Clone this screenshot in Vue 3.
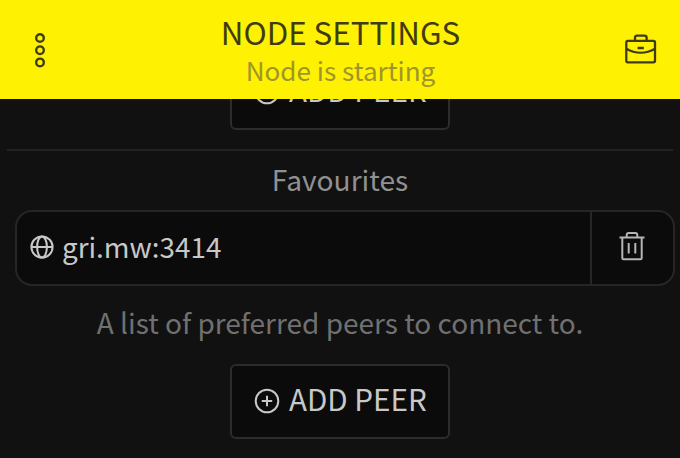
<script setup>
import { ref } from 'vue';

const title = ref('NODE SETTINGS');
const status = ref('Node is starting');
const peers = ref(['gri.mw:3414']);

const removePeer = (peer) => {
    peers.value = peers.value.filter(p => p !== peer);
};
</script>

<template>
    <div class="screen">
        <header class="header">
            <svg class="dots" width="12" height="38" viewBox="0 0 12 38">
                <circle cx="6" cy="7" r="3.8" />
                <circle cx="6" cy="19.2" r="3.8" />
                <circle cx="6" cy="31.4" r="3.8" />
            </svg>
            <div class="titles">
                <div class="title">{{ title }}</div>
                <div class="status">{{ status }}</div>
            </div>
            <svg class="briefcase" width="34" height="32" viewBox="0 0 34 32">
                <rect x="2.3" y="7.9" width="28.7" height="21.4" rx="1.5" />
                <path d="M11 7.5V4.6a2 2 0 0 1 2-2h7.6a2 2 0 0 1 2 2v2.9" />
                <path d="M2.3 15.8c9 5.2 19.7 5.2 28.7 0M13.6 15h6.2" />
            </svg>
        </header>

        <main class="content">
            <button class="add">
                <svg width="26" height="26" viewBox="0 0 26 26">
                    <circle cx="13" cy="13" r="11.3" />
                    <path d="M13 7.8v10.4M7.8 13h10.4" />
                </svg>
                <span>ADD PEER</span>
            </button>
            <div class="line"></div>
            <div class="section">Favourites</div>
            <div v-for="peer in peers" :key="peer" class="peer">
                <div class="address">
                    <svg width="24" height="24" viewBox="0 0 24 24">
                        <circle cx="12" cy="12" r="10.6" />
                        <ellipse cx="12" cy="12" rx="4.9" ry="10.6" />
                        <path d="M1.4 12h21.2" />
                    </svg>
                    <span>{{ peer }}</span>
                </div>
                <div class="remove" @click="removePeer(peer)">
                    <svg width="28" height="30" viewBox="0 0 28 30">
                        <path d="M1.5 6.5h25" />
                        <path d="M4.3 6.5v20.2a1.5 1.5 0 0 0 1.5 1.5h16.4a1.5 1.5 0 0 0 1.5-1.5v-20.2" />
                        <path d="M8.7 6V4a2 2 0 0 1 2-2h6.6a2 2 0 0 1 2 2v2M10.7 12v10.5M17.3 12v10.5" />
                    </svg>
                </div>
            </div>
            <div class="hint">A list of preferred peers to connect to.</div>
            <button class="add">
                <svg width="26" height="26" viewBox="0 0 26 26">
                    <circle cx="13" cy="13" r="11.3" />
                    <path d="M13 7.8v10.4M7.8 13h10.4" />
                </svg>
                <span>ADD PEER</span>
            </button>
        </main>
    </div>
</template>

<style>
body {
    background: #111;
}
</style>

<style scoped>
.screen {
    height: 458px;
    overflow: hidden;
    background: #111;
    font-family: "Noto Sans CJK SC", "Noto Sans", sans-serif;
}
svg {
    display: block;
    flex: none;
    fill: none;
    stroke: currentColor;
    stroke-width: 2;
}
.header {
    position: relative;
    z-index: 1;
    display: flex;
    justify-content: space-between;
    box-sizing: border-box;
    height: 98.6px;
    padding: 0 22px 0 34px;
    background: #fef102;
    color: #3f3c13;
}
.dots {
    margin: 31px 11px 0 0;
    stroke-width: 2.4;
}
.briefcase {
    margin-top: 33px;
    stroke-width: 2.3;
}
.titles {
    text-align: center;
    white-space: nowrap;
}
.title {
    padding-top: 12px;
    line-height: 40px;
    font-size: 31.3px;
}
.status {
    line-height: 36px;
    font-size: 26.1px;
    color: #a0952a;
}
.content {
    display: flex;
    flex-direction: column;
    margin-top: -43.6px;
}
.add {
    display: flex;
    align-items: center;
    align-self: center;
    box-sizing: border-box;
    width: 220px;
    height: 75px;
    padding: 0 0 0 22px;
    gap: 9px;
    border: 2px solid #2c2c2c;
    border-radius: 6px;
    background: #0b0b0b;
    color: #c8c8c8;
    font-family: inherit;
    font-size: 29.6px;
    line-height: 40px;
    white-space: nowrap;
}
.add svg {
    margin-top: -1px;
}
.add span {
    margin-top: -6px;
}
.line {
    height: 2px;
    margin: 19px 7px 0;
    background: #222;
}
.section {
    margin-top: 8px;
    line-height: 40px;
    text-align: center;
    font-size: 28.1px;
    color: #919191;
}
.peer {
    display: flex;
    box-sizing: border-box;
    height: 76px;
    margin: 11px 5px 0 15px;
    border: 2px solid #262626;
    border-radius: 17px;
    background: #0b0b0b;
    color: #c8c8c8;
}
.address {
    display: flex;
    flex: 1;
    align-items: center;
    gap: 8px;
    padding-left: 13px;
    font-size: 27.8px;
    line-height: 40px;
}
.address svg {
    margin-top: -2px;
}
.address span {
    margin-top: -5px;
}
.remove {
    display: flex;
    align-items: center;
    justify-content: center;
    width: 81px;
    border-left: 2px solid #262626;
    color: #b5b5b5;
}
.remove svg {
    margin: -4px 2px 0 0;
}
.hint {
    margin: 16px 0 22px;
    line-height: 40px;
    text-align: center;
    font-size: 28px;
    color: #707070;
}
</style>
